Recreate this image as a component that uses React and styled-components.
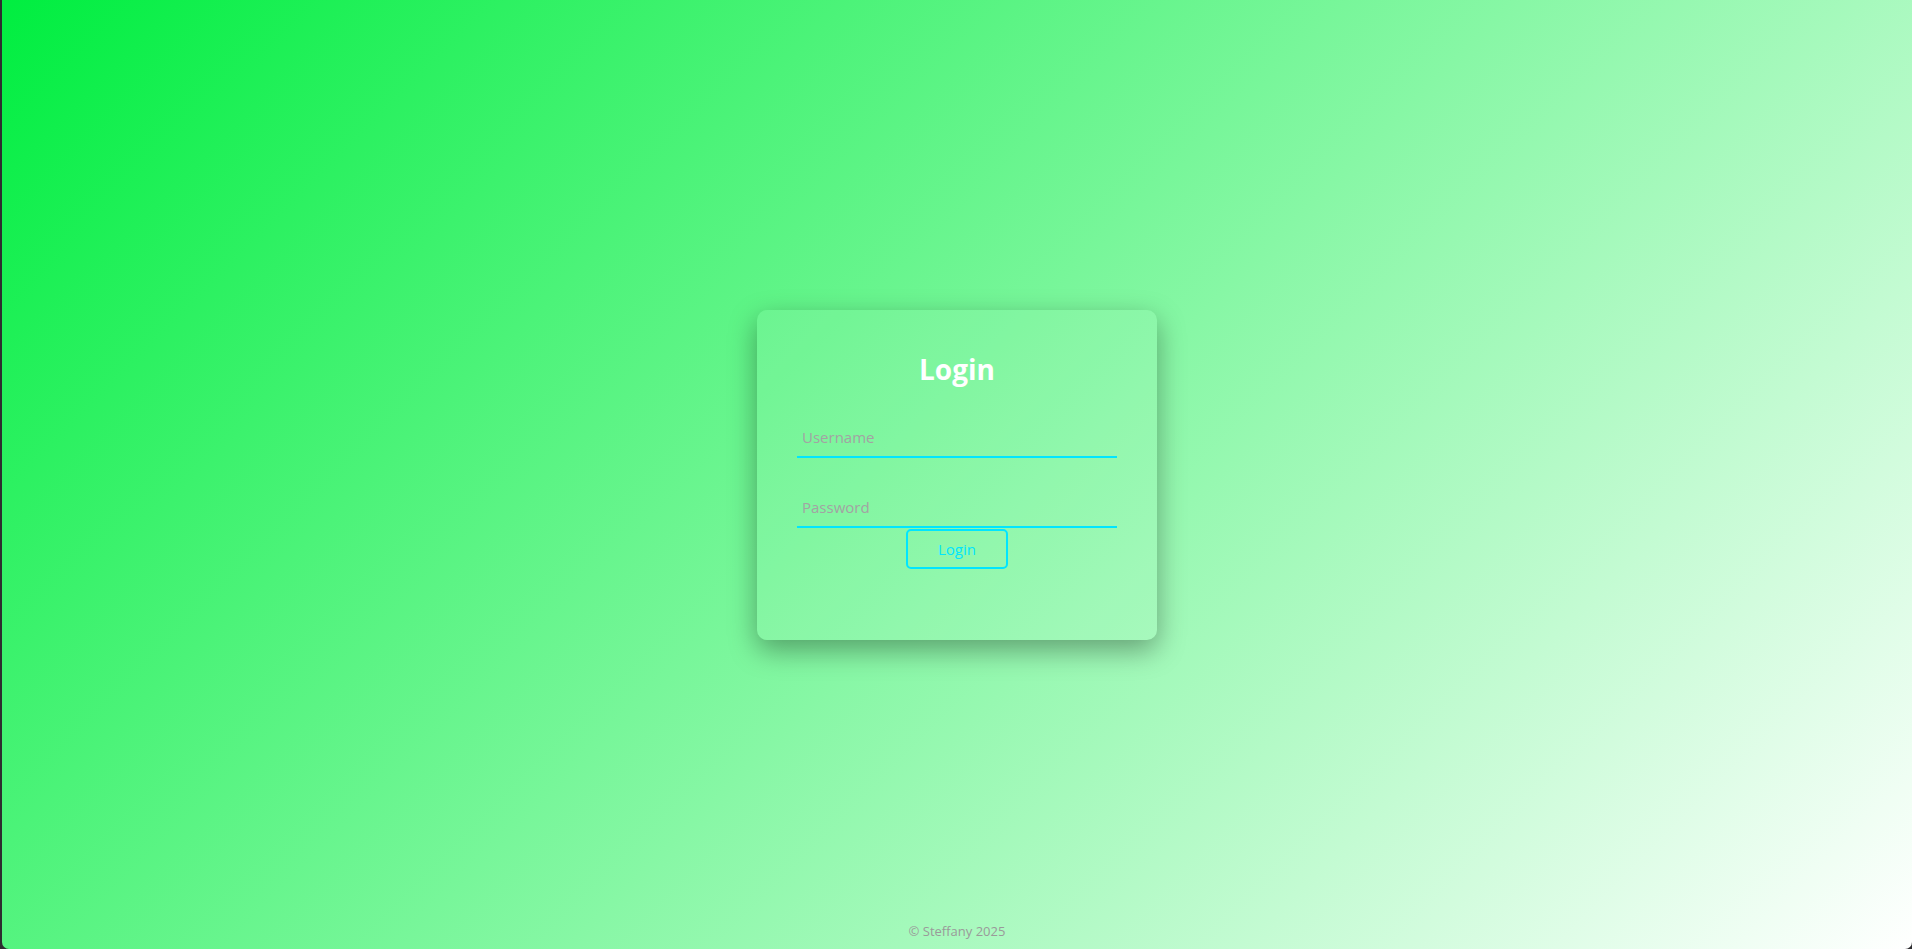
import React from 'react';
import styled, { createGlobalStyle } from 'styled-components';

const GlobalStyle = createGlobalStyle`
  html, body {
    margin: 0;
    padding: 0;
    height: 100%;
    background: #2d2d30;
  }
  #root {
    height: 100%;
  }
`;

const Page = styled.div`
  height: 100vh;
  margin-left: 2px;
  box-sizing: border-box;
  border-radius: 0 0 7px 7px;
  overflow: hidden;
  background: linear-gradient(135deg, #00ee40 0%, #ffffff 100%);
  font-family: "Open Sans", "Noto Sans", sans-serif;
  display: grid;
  grid-template-areas: "stack";
`;

const Main = styled.main`
  grid-area: stack;
  display: flex;
  align-items: center;
  justify-content: center;
`;

const Card = styled.form`
  width: 400px;
  box-sizing: border-box;
  padding: 38px 40px 71px;
  border-radius: 10px;
  background: rgba(255, 255, 255, 0.08);
  box-shadow: 0 10px 28px rgba(0, 0, 0, 0.35);
  display: flex;
  flex-direction: column;
  align-items: center;
`;

const Title = styled.h1`
  margin: 0 0 27px;
  font-size: 28px;
  line-height: 43px;
  font-weight: 700;
  color: #ffffff;
`;

const Input = styled.input`
  width: 100%;
  height: 40px;
  box-sizing: border-box;
  margin-top: ${({ $gap }) => $gap || 0}px;
  padding: 0 5px;
  border: none;
  border-bottom: 2px solid #00e5ff;
  background: transparent;
  outline: none;
  font-family: "Open Sans", "Noto Sans", sans-serif;
  font-size: 15px;
  color: #333;

  &::placeholder {
    color: #a3a3a3;
  }
`;

const Button = styled.button`
  width: 102px;
  height: 40px;
  margin-top: 1px;
  border: 2px solid #00e5ff;
  border-radius: 5px;
  background: transparent;
  color: #00e5ff;
  font-family: "Open Sans", "Noto Sans", sans-serif;
  font-size: 15px;
  cursor: pointer;
`;

const Footer = styled.footer`
  grid-area: stack;
  align-self: end;
  justify-self: center;
  padding: 0 0 9px;
  font-size: 13px;
  color: #9a9a9a;
`;

export default function App() {
  return (
    <>
      <GlobalStyle />
      <Page>
        <Main>
          <Card onSubmit={(e) => e.preventDefault()}>
            <Title>Login</Title>
            <Input type="text" placeholder="Username" />
            <Input type="password" placeholder="Password" $gap={30} />
            <Button type="submit">Login</Button>
          </Card>
        </Main>
        <Footer>© Steffany 2025</Footer>
      </Page>
    </>
  );
}
